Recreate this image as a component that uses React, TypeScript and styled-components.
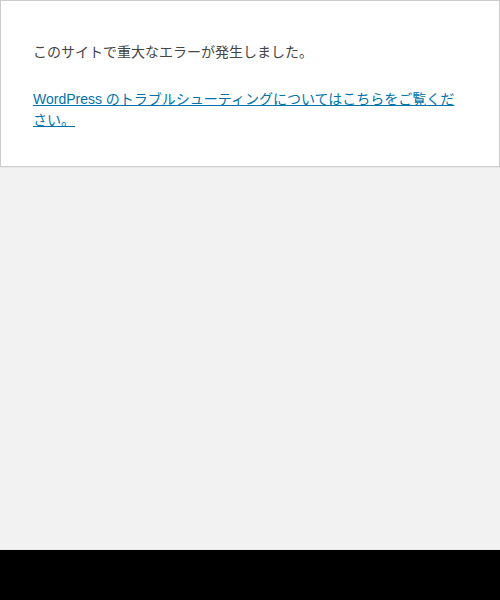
import { FC } from "react"
import styled, { createGlobalStyle } from "styled-components"

const GlobalStyle = createGlobalStyle`
	html, body {
		margin: 0;
		padding: 0;
		background: #000;
	}
`

const App: FC = () => {
	return (
		<>
			<GlobalStyle />
			<Viewport>
				<ErrorBox>
					<Message>このサイトで重大なエラーが発生しました。</Message>
					<Message>
						<Link href="#">WordPress のトラブルシューティングについてはこちらをご覧ください。</Link>
					</Message>
				</ErrorBox>
			</Viewport>
			<Letterbox />
		</>
	)
}

const Viewport = styled.div`
	/* Layout */
	display: flex;
	flex-direction: column;
	height: 550px;
	box-sizing: border-box;

	/* Color */
	background: #f2f2f2;
	border-bottom: 1px solid #e8e8e8;
`

const ErrorBox = styled.div`
	/* Layout */
	padding: 16px 32px 15px 32px;

	/* Color */
	background: #fff;
	color: #444;
	border: 1px solid #ccc;
	box-shadow: 0 1px 1px rgba(0, 0, 0, 0.04);

	/* Text */
	font-family: "Liberation Sans", "Noto Sans CJK JP", sans-serif;
	font-size: 14px;
`

const Message = styled.p`
	margin: 25px 0 20px;
	line-height: 21px;

	& + & {
		margin-top: 26px;
	}
`

const Link = styled.a`
	color: #0073aa;
	text-decoration: underline;
`

const Letterbox = styled.div`
	height: 50px;
	background: #000;
`

export default App
